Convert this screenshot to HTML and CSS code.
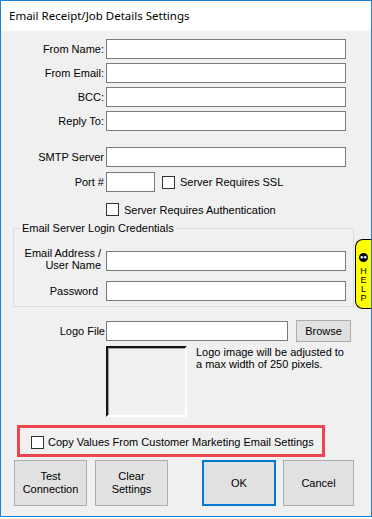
FILE: index.html
```html
<!doctype html>
<html lang="en">
  <head>
    <meta charset="utf-8">
    <meta name="viewport" content="width=device-width, initial-scale=1">
    <title>Email Receipt/Job Details Settings</title>
    <link rel="stylesheet" href="styles.css">
  </head>
  <body>
    <div class="window">
        <div class="titlebar">Email Receipt/Job Details Settings</div>
        <div class="content">
            <div class="fields">
                <div class="row">
                    <label class="label">From Name:</label>
                    <input type="text" class="text wide">
                </div>
                <div class="row">
                    <label class="label">From Email:</label>
                    <input type="text" class="text wide">
                </div>
                <div class="row">
                    <label class="label">BCC:</label>
                    <input type="text" class="text wide">
                </div>
                <div class="row">
                    <label class="label">Reply To:</label>
                    <input type="text" class="text wide">
                </div>
            </div>
            <div class="row smtp">
                <label class="label">SMTP Server</label>
                <input type="text" class="text wide">
            </div>
            <div class="row port">
                <label class="label">Port #</label>
                <input type="text" class="text port-box">
                <span class="check ssl"></span>
                <span class="check-text">Server Requires SSL</span>
            </div>
            <div class="row auth">
                <span class="check"></span>
                <span class="check-text">Server Requires Authentication</span>
            </div>
            <fieldset class="creds">
                <legend>Email Server Login Credentials</legend>
                <div class="row user">
                    <label class="label">Email Address /<br>User Name</label>
                    <input type="text" class="text wide">
                </div>
                <div class="row pass">
                    <label class="label">Password</label>
                    <input type="password" class="text wide">
                </div>
            </fieldset>
            <div class="row logo">
                <label class="label">Logo File</label>
                <input type="text" class="text logo-box">
                <button type="button" class="btn browse">Browse</button>
            </div>
            <div class="preview-row">
                <div class="preview"></div>
                <p class="note">Logo image will be adjusted to<br>a max width of 250 pixels.</p>
            </div>
            <div class="copy-box">
                <span class="check"></span>
                <span class="check-text">Copy Values From Customer Marketing Email Settings</span>
            </div>
            <div class="buttons">
                <button type="button" class="btn big">Test<br>Connection</button>
                <button type="button" class="btn big">Clear<br>Settings</button>
                <button type="button" class="btn big ok">OK</button>
                <button type="button" class="btn big cancel">Cancel</button>
            </div>
        </div>
        <div class="help-tab">
            <svg width="9" height="9" viewBox="0 0 9 9">
                <circle cx="4.5" cy="4.5" r="4.5" fill="#000"/>
                <circle cx="2.8" cy="4.3" r="1.3" fill="#fff"/>
                <circle cx="6.2" cy="4.3" r="1.3" fill="#fff"/>
                <circle cx="4.5" cy="4.6" r="0.8" fill="#2a6fd0"/>
            </svg>
            <span>H</span>
            <span>E</span>
            <span>L</span>
            <span>P</span>
        </div>
    </div>
  </body>
</html>
```

FILE: styles.css
```css
body{
    margin:0;
    background:#fff;
    font-family: "Liberation Sans", Arial, sans-serif;
    font-size:11px;
    color:#000;
}
.window{
    position:relative;
    box-sizing:border-box;
    width:372px;
    height:517px;
    border:1px solid #1883d7;
    background:#f0f0f0;
}
.titlebar{
    height:30px;
    line-height:30px;
    padding-left:8px;
    background:#fff;
    font-family: "Noto Sans", "Open Sans", sans-serif;
    font-size:11.5px;
}
.content{
    display:flex;
    flex-direction:column;
}
.fields{
    display:flex;
    flex-direction:column;
    gap:4px;
    padding-top:8px;
}
.row{
    display:flex;
    align-items:center;
    height:20px;
}
.label{
    width:103px;
    margin-right:2px;
    text-align:right;
    white-space:nowrap;
}
.text{
    box-sizing:border-box;
    height:20px;
    margin:0;
    border:1px solid #7a7a7a;
    background:#fff;
    padding:0 2px;
    font:inherit;
}
.wide{
    width:240px;
}
.smtp{
    margin-top:16px;
}
.port{
    margin-top:5px;
}
.port-box{
    width:49px;
}
.check{
    box-sizing:border-box;
    width:13px;
    height:13px;
    flex:none;
    border:1px solid #333;
    background:#fff;
}
.check-text{
    margin-left:5px;
    white-space:nowrap;
}
.ssl{
    margin-left:7px;
}
.auth{
    height:13px;
    margin-top:11px;
    padding-left:105px;
}
.creds{
    box-sizing:border-box;
    width:341px;
    margin:5px 0 0 12px;
    padding:0 0 5px 0;
    border:1px solid #dcdcdc;
}
.creds legend{
    margin-left:6px;
    padding:0 2px;
    line-height:14px;
}
.creds .label{
    width:87px;
    margin-right:5px;
}
.user{
    height:24px;
    align-items:flex-end;
    margin-top:12px;
}
.user .label{
    line-height:12px;
}
.pass{
    margin-top:10px;
}
.pass .label{
    box-sizing:border-box;
    padding-right:3px;
}
.logo{
    height:22px;
    margin-top:13px;
}
.logo .label{
    width:104px;
    margin-right:1px;
}
.logo-box{
    width:182px;
}
.btn{
    box-sizing:border-box;
    margin:0;
    padding:0;
    border:1px solid #adadad;
    background:#e1e1e1;
    font:inherit;
    color:#000;
    line-height:13px;
}
.browse{
    width:55px;
    height:22px;
    margin-left:8px;
}
.preview-row{
    display:flex;
    align-items:flex-start;
    margin-top:4px;
    padding-left:105px;
}
.preview{
    box-sizing:border-box;
    width:81px;
    height:71px;
    border:2px inset #a0a0a0;
    border-color:#696969 #fff #fff #696969;
    box-shadow:inset 1px 1px 0 #a0a0a0;
}
.note{
    margin:0 0 0 9px;
    line-height:12px;
}
.copy-box{
    box-sizing:border-box;
    display:flex;
    align-items:center;
    width:308px;
    height:32px;
    margin:8px 0 0 16px;
    padding:2px 0 0 11px;
    border:3px solid #ef4450;
}
.copy-box .check-text{
    margin-left:4px;
}
.buttons{
    display:flex;
    margin:3px 0 0 13px;
}
.big{
    width:73px;
    height:46px;
}
.big + .big{
    margin-left:8px;
}
.big.ok{
    width:74px;
    margin-left:34px;
    border:2px solid #0078d7;
}
.big.cancel{
    width:71px;
    margin-left:7px;
}
.help-tab{
    position:absolute;
    top:238px;
    right:0;
    box-sizing:border-box;
    width:16px;
    height:70px;
    display:flex;
    flex-direction:column;
    align-items:center;
    padding-top:13px;
    border:1px solid #000;
    border-right:none;
    border-radius:8px 0 0 8px;
    background:#ffff00;
    font-size:9px;
    line-height:9px;
}
.help-tab svg{
    margin-bottom:5px;
}
```
